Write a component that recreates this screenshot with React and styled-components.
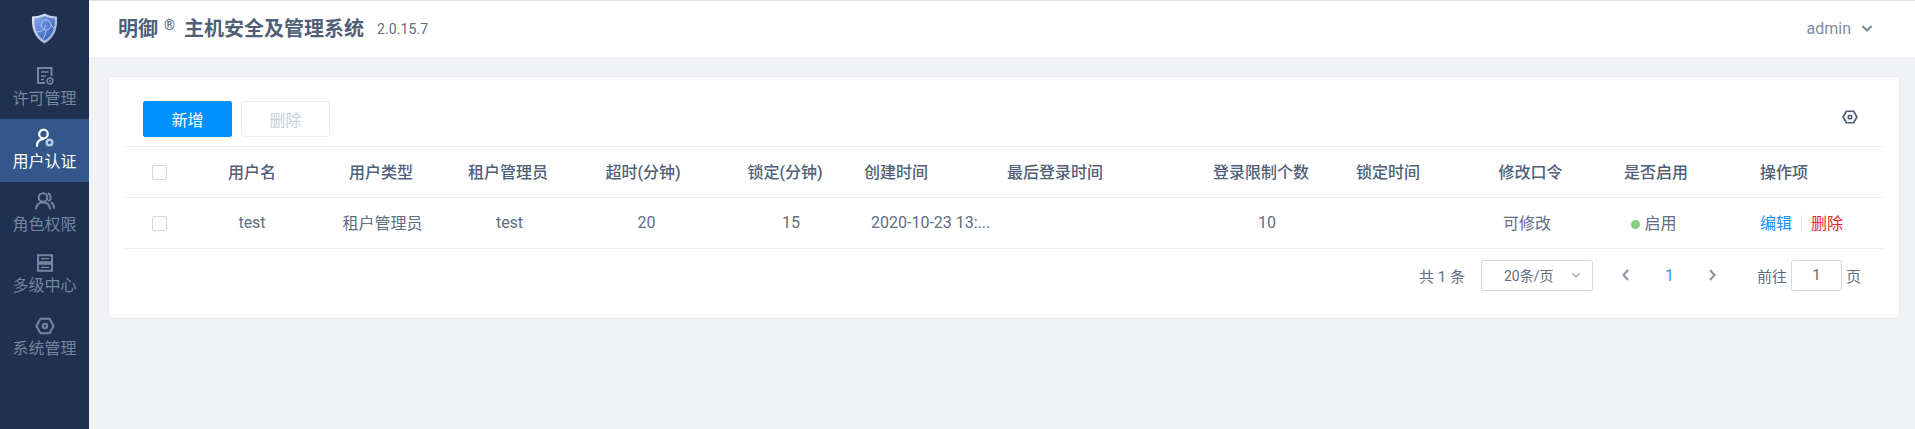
import React from "react";
import styled, { createGlobalStyle } from "styled-components";

const FONT = `Roboto, "Noto Sans CJK SC", sans-serif`;

const Global = createGlobalStyle`
  html, body { margin: 0; padding: 0; height: 100%; background: #f0f2f6; }
  #root { height: 100%; }
  * { box-sizing: border-box; }
  body { font-family: ${FONT}; overflow: hidden; }
`;

const Page = styled.div`
  display: flex;
  width: 1915px;
  height: 429px;
  border-top: 1px solid #dcdfe6;
  background: #f0f2f6;
`;

const Sidebar = styled.aside`
  width: 89px;
  margin-top: -1px;
  flex: none;
  background: #1f3050;
  display: flex;
  flex-direction: column;
`;

const LogoBox = styled.div`
  height: 56px;
  display: flex;
  align-items: center;
  justify-content: center;
  padding-right: 1px;
`;

const NavItem = styled.div`
  height: 63px;
  display: flex;
  flex-direction: column;
  align-items: center;
  padding-top: 8px;
  background: ${(p) => (p.$active ? "#33578a" : "transparent")};
  color: ${(p) => (p.$active ? "#ffffff" : "#72869e")};
  font-size: 16px;
  line-height: 22px;
  svg { display: block; margin-bottom: 2px; }
`;

const Main = styled.div`
  flex: 1;
  min-width: 0;
  display: flex;
  flex-direction: column;
`;

const Header = styled.header`
  height: 56px;
  background: #fff;
  display: flex;
  align-items: center;
  padding: 0 41px 0 29px;
  color: #515f78;
`;

const Brand = styled.span`
  font-size: 20px;
  font-weight: 700;
  line-height: 28px;
`;

const Reg = styled.sup`
  font-size: 14px;
  font-weight: 400;
  line-height: 1;
  margin: 0 9px 0 6px;
  position: relative;
  top: -6px;
  vertical-align: baseline;
`;

const Version = styled.span`
  font-size: 14px;
  margin-left: 13px;
  margin-bottom: 1px;
  letter-spacing: 0.1px;
  color: #606d82;
`;

const UserMenu = styled.div`
  margin-left: auto;
  margin-bottom: 2px;
  display: flex;
  align-items: center;
  gap: 9px;
  font-size: 16px;
  color: #7f8c9f;
`;

const Content = styled.main`
  padding: 19px 15px 0 19px;
`;

const Card = styled.section`
  height: 243px;
  background: #fff;
  border: 1px solid #e8eaf0;
  border-radius: 5px;
  padding: 24px 16px 0 16px;
`;

const Toolbar = styled.div`
  height: 45px;
  padding: 0 25px 0 18px;
  display: flex;
  align-items: flex-start;
  gap: 9px;
`;

const Button = styled.button`
  width: 89px;
  height: 36px;
  border-radius: 2px;
  font: 400 16px ${FONT};
  border: 1px solid ${(p) => (p.$primary ? "#0091ff" : "#ebeef5")};
  background: ${(p) => (p.$primary ? "#0091ff" : "#fff")};
  color: ${(p) => (p.$primary ? "#fff" : "#c8cfda")};
  padding: 0;
`;

const ToolIcon = styled.div`
  margin-left: auto;
  padding-top: 8px;
  color: #4f5e78;
  display: flex;
`;

const Table = styled.table`
  width: 1758px;
  table-layout: fixed;
  border-collapse: collapse;
  border-top: 1px solid #eceef5;
`;

const Row = styled.tr`
  height: 51px;
  border-bottom: 1px solid #eceef5;
`;

const Th = styled.th`
  padding: 0 0 2px ${(p) => p.$pad || 0}px;
  font-size: 16px;
  font-weight: 500;
  color: #515f78;
  text-align: ${(p) => p.$align || "center"};
  white-space: nowrap;
`;

const Td = styled.td`
  padding: 0 ${(p) => p.$padRight || 0}px 2px ${(p) => p.$pad || 0}px;
  font-size: 16px;
  font-weight: 400;
  color: #606d82;
  text-align: ${(p) => p.$align || "center"};
  white-space: nowrap;
`;

const Check = styled.span`
  display: inline-block;
  width: 15px;
  height: 15px;
  border: 1px solid #d4d8e2;
  border-radius: 2px;
  vertical-align: middle;
  background: #fff;
`;

const Dot = styled.span`
  display: inline-block;
  width: 9px;
  height: 9px;
  border-radius: 50%;
  background: #85ce82;
  margin-right: 4px;
  vertical-align: 0;
`;

const Link = styled.span`
  color: ${(p) => (p.$danger ? "#f5222d" : "#1890ff")};
`;

const Divider = styled.span`
  display: inline-block;
  width: 1px;
  height: 17px;
  background: #e0e3ea;
  margin: 0 9px;
  vertical-align: -3px;
`;

const Pager = styled.div`
  height: 54px;
  display: flex;
  align-items: center;
  justify-content: flex-end;
  padding: 0 22px 0 0;
  margin-top: -1px;
  font-size: 15px;
  color: #606d82;
`;

const Total = styled.span`
  margin-right: 16px;
`;

const Select = styled.div`
  width: 112px;
  height: 31px;
  border: 1px solid #d4d8e2;
  border-radius: 2px;
  display: flex;
  align-items: center;
  padding: 0 10px 0 22px;
  justify-content: space-between;
  color: #606d82;
  font-size: 14px;
  margin-right: 12px;
  svg { color: #aab2bf; }
`;

const PageBtn = styled.span`
  width: 43px;
  text-align: center;
  display: flex;
  justify-content: center;
  color: ${(p) => (p.$current ? "#3f8ff0" : "#8c96a6")};
  font-size: 16px;
`;

const Jump = styled.span`
  margin-left: 23px;
  display: flex;
  align-items: center;
  gap: 4px;
`;

const JumpBox = styled.span`
  width: 51px;
  height: 31px;
  border: 1px solid #d4d8e2;
  border-radius: 2px;
  display: flex;
  align-items: center;
  justify-content: center;
  font-size: 15px;
`;

const Shield = () => (
  <svg width="27" height="31" viewBox="0 0 27 31">
    <defs>
      <linearGradient id="sh" x1="0" y1="0" x2="1" y2="1">
        <stop offset="0" stopColor="#86aaf0" />
        <stop offset="1" stopColor="#2f55b8" />
      </linearGradient>
      <linearGradient id="rim" x1="0" y1="0" x2="1" y2="1">
        <stop offset="0" stopColor="#e6eef8" />
        <stop offset="1" stopColor="#8ea6c4" />
      </linearGradient>
    </defs>
    <path d="M13.5 0.5 C17 2.5 22 3.5 26 3.5 C26.5 14 25 24 13.5 30.5 C2 24 0.5 14 1 3.5 C5 3.5 10 2.5 13.5 0.5Z" fill="url(#rim)" />
    <path d="M13.5 3 C17 4.5 20.5 5.5 23.8 5.6 C24 14 22.5 22.5 13.5 27.6 C4.5 22.5 3 14 3.2 5.6 C6.5 5.5 10 4.5 13.5 3Z" fill="url(#sh)" />
    <g fill="none" stroke="#c8d8f5" strokeWidth="1" opacity="0.8">
      <circle cx="15" cy="12" r="5" />
      <path d="M5 19 C10 19 13 17 15 12 M15 17 C15 21 13 24 12 26 M20 12 L23 15" />
    </g>
  </svg>
);

const LicenseIcon = () => (
  <svg width="20" height="22" viewBox="0 0 20 22" fill="none" stroke="currentColor" strokeWidth="2">
    <path d="M16.5 12 V4 H3 V19 H10" />
    <path d="M6 8 H13.5 M6 12 H11 M6 15.5 H9" strokeWidth="1.5" />
    <circle cx="15" cy="17" r="2.9" strokeWidth="1.5" />
    <circle cx="15" cy="17" r="1" fill="currentColor" stroke="none" />
  </svg>
);

const UserIcon = () => (
  <svg width="20" height="22" viewBox="0 0 20 22" fill="none">
    <circle cx="8.5" cy="7" r="4.3" stroke="currentColor" strokeWidth="2.2" />
    <path d="M2 19 C2 15 4.5 12.5 8 12.2" stroke="currentColor" strokeWidth="2.2" strokeLinecap="round" />
    <circle cx="14.5" cy="15.5" r="4" fill="#b9cbe9" />
    <circle cx="14.5" cy="15.5" r="1.6" fill="#33578a" />
  </svg>
);

const RoleIcon = () => (
  <svg width="22" height="22" viewBox="0 0 22 22" fill="none" stroke="currentColor" strokeWidth="2" strokeLinecap="round">
    <circle cx="9" cy="7.5" r="4.3" />
    <path d="M2 18.5 C2.5 14.5 5 12.5 9 12.5 C13 12.5 15.5 14.5 16 18.5" />
    <path d="M14.5 3.5 C17 4.5 17.5 9 15 10.8 M17.5 12.5 C19.2 13.8 20 15.5 20 18" />
  </svg>
);

const CenterIcon = () => (
  <svg width="18" height="20" viewBox="0 0 18 20" fill="none" stroke="currentColor">
    <rect x="2" y="2.2" width="14" height="7" strokeWidth="2" />
    <rect x="2" y="10.8" width="14" height="7" strokeWidth="2" />
    <path d="M5 5.7 H13 M5 14.3 H13" strokeWidth="1.3" />
  </svg>
);

const HexIcon = ({ size = 20, sw = 2.1 }) => (
  <svg width={size} height={size} viewBox="0 0 20 20" fill="none" stroke="currentColor" strokeWidth={sw}>
    <path d="M5.5 2.8 H14.5 L18.6 10 L14.5 17.2 H5.5 L1.4 10 Z" strokeLinejoin="round" />
    <circle cx="10" cy="10" r="2.2" />
  </svg>
);

const Chevron = ({ dir = "down", size = 14, sw = 2.2 }) => {
  const d = {
    down: "M2.5 5 L7 9.5 L11.5 5",
    left: "M9 2 L4.5 7 L9 12",
    right: "M5 2 L9.5 7 L5 12",
  }[dir];
  return (
    <svg width={size} height={size} viewBox="0 0 14 14" fill="none" stroke="currentColor" strokeWidth={sw}>
      <path d={d} />
    </svg>
  );
};

const nav = [
  { label: "许可管理", Icon: LicenseIcon },
  { label: "用户认证", Icon: UserIcon, active: true },
  { label: "角色权限", Icon: RoleIcon },
  { label: "多级中心", Icon: CenterIcon },
  { label: "系统管理", Icon: () => <HexIcon /> },
];

const columns = [
  { w: 69, th: <Check />, td: <Check /> },
  { w: 116, th: "用户名", td: "test" },
  { w: 142, th: "用户类型", td: "租户管理员", tdPad: 3 },
  { w: 112, th: "租户管理员", td: "test", tdPad: 3 },
  { w: 158, th: "超时(分钟)", td: "20", tdPad: 7 },
  { w: 126, th: "锁定(分钟)", td: "15", tdPad: 12 },
  { w: 143, th: "创建时间", td: "2020-10-23 13:...", align: "left", pad: 16, tdPad: 23 },
  { w: 192, th: "最后登录时间", td: "", align: "left", pad: 16 },
  { w: 156, th: "登录限制个数", td: "10", tdPad: 12 },
  { w: 154, th: "锁定时间", td: "", align: "left", pad: 17 },
  { w: 75, th: "修改口令", td: "可修改", tdPadRight: 7 },
  { w: 176, th: "是否启用", td: <><Dot />启用</>, tdPadRight: 4 },
  {
    w: 139,
    th: "操作项",
    td: <><Link>编辑</Link><Divider /><Link $danger>删除</Link></>,
    align: "left",
    pad: 16,
  },
];

export default function App() {
  return (
    <>
      <Global />
      <Page>
        <Sidebar>
          <LogoBox><Shield /></LogoBox>
          {nav.map(({ label, Icon, active }) => (
            <NavItem key={label} $active={active}>
              <Icon />
              {label}
            </NavItem>
          ))}
        </Sidebar>
        <Main>
          <Header>
            <Brand>明御<Reg>®</Reg>主机安全及管理系统</Brand>
            <Version>2.0.15.7</Version>
            <UserMenu>admin <Chevron /></UserMenu>
          </Header>
          <Content>
            <Card>
              <Toolbar>
                <Button $primary>新增</Button>
                <Button>删除</Button>
                <ToolIcon><HexIcon size={16} /></ToolIcon>
              </Toolbar>
              <Table>
                <colgroup>
                  {columns.map((c, i) => <col key={i} style={{ width: c.w }} />)}
                </colgroup>
                <thead>
                  <Row>
                    {columns.map((c, i) => (
                      <Th key={i} $align={c.align} $pad={c.pad}>{c.th}</Th>
                    ))}
                  </Row>
                </thead>
                <tbody>
                  <Row>
                    {columns.map((c, i) => (
                      <Td key={i} $align={c.align} $pad={c.tdPad ?? c.pad} $padRight={c.tdPadRight}>{c.td}</Td>
                    ))}
                  </Row>
                </tbody>
              </Table>
              <Pager>
                <Total>共 1 条</Total>
                <Select>20条/页<Chevron size={12} sw={1.8} /></Select>
                <PageBtn><Chevron dir="left" /></PageBtn>
                <PageBtn $current>1</PageBtn>
                <PageBtn><Chevron dir="right" /></PageBtn>
                <Jump>前往<JumpBox>1</JumpBox>页</Jump>
              </Pager>
            </Card>
          </Content>
        </Main>
      </Page>
    </>
  );
}
